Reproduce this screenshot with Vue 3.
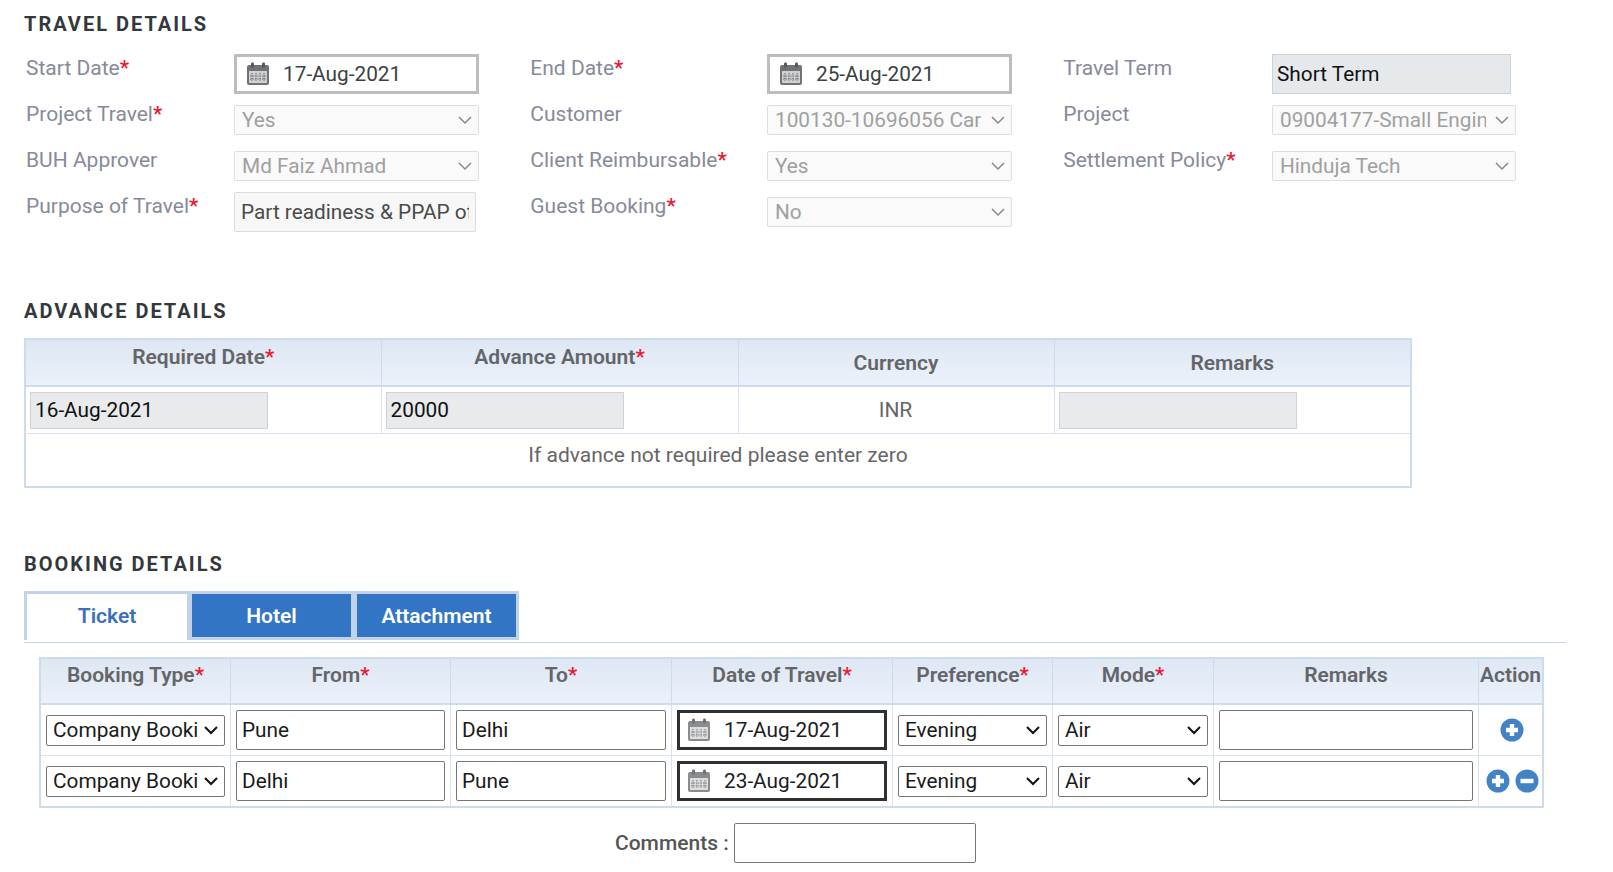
<script setup>
const travelRows = [
  [
    { label: 'Start Date', req: true, type: 'date', value: '17-Aug-2021' },
    { label: 'End Date', req: true, type: 'date', value: '25-Aug-2021' },
    { label: 'Travel Term', type: 'readonly', value: 'Short Term' }
  ],
  [
    { label: 'Project Travel', req: true, type: 'select', value: 'Yes' },
    { label: 'Customer', type: 'select', value: '100130-10696056 Carraro India' },
    { label: 'Project', type: 'select', value: '09004177-Small Engine Programme', wide: true }
  ],
  [
    { label: 'BUH Approver', type: 'select', value: 'Md Faiz Ahmad' },
    { label: 'Client Reimbursable', req: true, type: 'select', value: 'Yes' },
    { label: 'Settlement Policy', req: true, type: 'select', value: 'Hinduja Tech', wide: true }
  ],
  [
    { label: 'Purpose of Travel', req: true, type: 'text', value: 'Part readiness & PPAP of small engine' },
    { label: 'Guest Booking', req: true, type: 'select', value: 'No' }
  ]
]

const bookingHeads = [
  { label: 'Booking Type', req: true },
  { label: 'From', req: true },
  { label: 'To', req: true },
  { label: 'Date of Travel', req: true },
  { label: 'Preference', req: true },
  { label: 'Mode', req: true },
  { label: 'Remarks' },
  { label: 'Action' }
]

const bookings = [
  { from: 'Pune', to: 'Delhi', date: '17-Aug-2021', remove: false },
  { from: 'Delhi', to: 'Pune', date: '23-Aug-2021', remove: true }
]
</script>

<template>
  <div class="page">
    <h2 class="title">TRAVEL DETAILS</h2>
    <div class="travel-grid">
      <template v-for="(row, r) in travelRows" :key="r">
        <template v-for="f in row" :key="f.label">
          <label class="field-label">{{ f.label }}<span v-if="f.req" class="star">*</span></label>
          <div class="field">
            <div v-if="f.type === 'date'" class="date-box">
              <svg class="cal" viewBox="0 0 24 24">
                <rect x="1" y="3" width="22" height="20" rx="2" fill="#707275" />
                <rect x="3" y="9" width="18" height="12" fill="#d0d1d2" />
                <rect x="5" y="0.5" width="3" height="5" rx="1.2" fill="#55575a" />
                <rect x="16" y="0.5" width="3" height="5" rx="1.2" fill="#55575a" />
                <path d="M6 11v8M10 11v8M14 11v8M18 11v8M4 14h16M4 17h16" stroke="#6a6c6f" stroke-width="1.1" stroke-dasharray="1.4 1" />
              </svg>
              <input class="date-input" :value="f.value" readonly />
            </div>
            <input v-else-if="f.type === 'readonly'" class="term-input" :value="f.value" readonly />
            <input v-else-if="f.type === 'text'" class="purpose-input" :value="f.value" readonly />
            <select v-else class="dis-select" :class="{ wide: f.wide }" disabled>
              <option>{{ f.value }}</option>
            </select>
          </div>
        </template>
      </template>
    </div>

    <h2 class="title advance-title">ADVANCE DETAILS</h2>
    <table class="tbl advance">
      <colgroup>
        <col style="width: 356px" />
        <col style="width: 357px" />
        <col style="width: 316px" />
        <col />
      </colgroup>
      <thead>
        <tr>
          <th><span class="raised">Required Date<span class="star">*</span></span></th>
          <th><span class="raised">Advance Amount<span class="star">*</span></span></th>
          <th>Currency</th>
          <th>Remarks</th>
        </tr>
      </thead>
      <tbody>
        <tr class="adv-row">
          <td><input class="grey-input" value="16-Aug-2021" readonly /></td>
          <td><input class="grey-input" value="20000" readonly /></td>
          <td class="center">INR</td>
          <td><input class="grey-input" readonly /></td>
        </tr>
        <tr class="note-row">
          <td colspan="4" class="center">If advance not required please enter zero</td>
        </tr>
      </tbody>
    </table>

    <h2 class="title booking-title">BOOKING DETAILS</h2>
    <div class="tabs-line">
      <div class="tabs">
        <div class="tab active">Ticket</div>
        <div class="tab">Hotel</div>
        <div class="tab">Attachment</div>
      </div>
    </div>

    <table class="tbl booking">
      <colgroup>
        <col style="width: 190.5px" />
        <col style="width: 220px" />
        <col style="width: 221px" />
        <col style="width: 221px" />
        <col style="width: 160px" />
        <col style="width: 161px" />
        <col style="width: 265px" />
        <col />
      </colgroup>
      <thead>
        <tr>
          <th v-for="h in bookingHeads" :key="h.label">{{ h.label }}<span v-if="h.req" class="star">*</span></th>
        </tr>
      </thead>
      <tbody>
        <tr v-for="b in bookings" :key="b.date">
          <td>
            <select class="row-select"><option>Company Booking</option></select>
          </td>
          <td><input class="row-input" :value="b.from" /></td>
          <td><input class="row-input" :value="b.to" /></td>
          <td>
            <div class="date-box dark">
              <svg class="cal" viewBox="0 0 24 24">
                <rect x="1" y="3" width="22" height="20" rx="2" fill="#8a8c8e" />
                <rect x="3" y="9" width="18" height="12" fill="#dcdddd" />
                <rect x="5" y="0.5" width="3" height="5" rx="1.2" fill="#717376" />
                <rect x="16" y="0.5" width="3" height="5" rx="1.2" fill="#717376" />
                <path d="M6 11v8M10 11v8M14 11v8M18 11v8M4 14h16M4 17h16" stroke="#7d7f82" stroke-width="1.1" stroke-dasharray="1.4 1" />
              </svg>
              <input class="date-input" :value="b.date" readonly />
            </div>
          </td>
          <td><select class="row-select"><option>Evening</option></select></td>
          <td><select class="row-select"><option>Air</option></select></td>
          <td><input class="row-input" /></td>
          <td class="actions">
            <svg class="act" viewBox="0 0 24 24">
              <circle cx="12" cy="12" r="11.5" fill="#4382c4" />
              <path d="M12 6v12M6 12h12" stroke="#fff" stroke-width="4.4" />
            </svg>
            <svg v-if="b.remove" class="act" viewBox="0 0 24 24">
              <circle cx="12" cy="12" r="11.5" fill="#4382c4" />
              <path d="M5.5 12h13" stroke="#fff" stroke-width="4.4" />
            </svg>
          </td>
        </tr>
      </tbody>
    </table>

    <div class="comments">
      <label class="comments-label">Comments :</label>
      <input class="comments-input" />
    </div>
  </div>
</template>

<style>
html,
body {
  margin: 0;
  background: #fff;
}
</style>

<style scoped>
.page {
  box-sizing: border-box;
  height: 872px;
  padding: 12px 47px 0 24px;
  overflow: hidden;
  font-family: Roboto, 'Liberation Sans', sans-serif;
  font-size: 21px;
}

.title {
  margin: 0;
  font-size: 20px;
  line-height: 24px;
  font-weight: 700;
  letter-spacing: 2px;
  color: #33383d;
}

.star {
  color: #f0142d;
  font-weight: 500;
}

input,
select {
  font-size: 20.8px !important;
}

/* travel details */
.travel-grid {
  display: grid;
  grid-template-columns: 210px 294.3px 238.7px 294.2px 210.8px 1fr;
  grid-auto-rows: 46px;
  margin-top: 18px;
}

.field-label {
  margin-top: 2px;
  line-height: 24px;
  color: #868a9a;
  padding-left: 2px;
}

.date-box {
  box-sizing: border-box;
  display: flex;
  align-items: center;
  width: 245px;
  height: 40px;
  padding-left: 9px;
  border: 3px solid #bdbdbd;
  background: #fff;
}

.date-box.dark {
  width: 100%;
  padding-left: 7px;
  border-color: #303030;
}

.cal {
  flex: none;
  width: 24px;
  height: 24px;
}

.date-input {
  flex: 1;
  min-width: 0;
  margin-left: 13px;
  padding: 0;
  border: none;
  outline: none;
  background: transparent;
  font: inherit;
  color: #3c3f43;
}

.dark .date-input {
  color: #1c1c20;
}

.term-input {
  box-sizing: border-box;
  width: 239px;
  height: 40px;
  padding: 0 4px;
  border: 1px solid #ccd2d8;
  background: #e6e9ec;
  font: inherit;
  color: #111;
  outline: none;
}

.purpose-input {
  box-sizing: border-box;
  display: block;
  width: 242px;
  height: 40px;
  padding: 0 6px;
  border: 1px solid #dcdcdc;
  border-radius: 2px;
  background: #f7f7f7;
  font: inherit;
  color: #4a4a4a;
  outline: none;
}

.dis-select {
  box-sizing: border-box;
  display: block;
  width: 245px;
  height: 30px;
  margin-top: 5px;
  padding: 0 29px 0 7px;
  border: 1px solid #dedede;
  border-radius: 2px;
  appearance: none;
  background: #fafafa url("data:image/svg+xml,%3Csvg xmlns='http://www.w3.org/2000/svg' width='14' height='9' viewBox='0 0 14 9'%3E%3Cpath d='M1 1l6 6 6-6' fill='none' stroke='%23888' stroke-width='1.5'/%3E%3C/svg%3E") no-repeat right 6px center;
  font: inherit;
  color: #a0a0a0;
  opacity: 1;
}

.dis-select.wide {
  width: 244px;
}

/* tables */
.tbl {
  border-collapse: collapse;
  table-layout: fixed;
  border: 2px solid #cddcec;
}

.tbl th {
  border: 1px solid #cddcec;
  border-bottom-width: 2px;
  background: linear-gradient(#dde7f3, #ebf1fa);
  font-weight: 600;
  color: #646568;
  text-align: center;
  padding: 0;
}

.tbl td {
  border: 1px solid #d6e2ef;
  padding: 0 5px;
}

.center {
  text-align: center;
  color: #666;
}

.advance-title {
  margin-top: 61px;
}

.advance {
  width: 1388px;
  margin-top: 15px;
}

.advance th {
  height: 45px;
}

.raised {
  display: block;
  margin-bottom: 12px;
}

.adv-row td {
  height: 46px;
  padding-left: 4px;
}

.note-row td {
  height: 42px;
  padding-bottom: 10px;
}

.grey-input {
  box-sizing: border-box;
  display: block;
  width: 238px;
  height: 37px;
  padding: 0 4px;
  border: 1px solid #ced3d8;
  background: #e8eaec;
  font: inherit;
  color: #111;
  outline: none;
}

/* booking */
.booking-title {
  margin-top: 64px;
}

.tabs-line {
  margin-top: 15px;
  border-bottom: 1px solid #c3d4e6;
  width: 1542px;
}

.tabs {
  display: inline-flex;
  vertical-align: bottom;
  gap: 5px;
  padding: 3px 3px 0;
  background: #c1d3e8;
  height: 49px;
  box-sizing: border-box;
  margin-bottom: 2px;
}

.tab {
  width: 159px;
  height: 43px;
  line-height: 45px;
  text-align: center;
  background: #3375c5;
  color: #fff;
  font-weight: 600;
}

.tab:last-child {
  margin-left: 1px;
}

.tab.active {
  width: 160px;
  height: 48px;
  background: #fff;
  color: #3a72ba;
}

.booking {
  width: 1505px;
  margin: 14px 0 0 15px;
}

.booking th {
  height: 46px;
  vertical-align: top;
  padding-top: 4px;
  line-height: 24px;
  box-sizing: border-box;
}

.booking td {
  height: 50px;
}

.row-input {
  box-sizing: border-box;
  display: block;
  width: 100%;
  height: 40px;
  padding: 0 5px;
  border: 1px solid #767676;
  border-radius: 2px;
  background: #fff;
  font: inherit;
  color: #1a1a1a;
  outline: none;
}

.row-select {
  box-sizing: border-box;
  display: block;
  width: 100%;
  height: 31px;
  padding: 0 26px 0 6px;
  border: 1px solid #767676;
  border-radius: 2px;
  appearance: none;
  background: #fff url("data:image/svg+xml,%3Csvg xmlns='http://www.w3.org/2000/svg' width='14' height='9' viewBox='0 0 14 9'%3E%3Cpath d='M1 1l6 6 6-6' fill='none' stroke='%23111' stroke-width='2'/%3E%3C/svg%3E") no-repeat right 6px center;
  font: inherit;
  color: #1a1a1a;
}

.actions {
  text-align: center;
  white-space: nowrap;
  font-size: 0;
  padding: 0 0 0 3px !important;
}

.act {
  width: 24px;
  height: 24px;
  vertical-align: middle;
}

.act + .act {
  margin-left: 5px;
}

.comments {
  display: flex;
  align-items: center;
  margin-top: 15px;
  padding-left: 591px;
}

.comments-label {
  font-weight: 500;
  color: #555;
}

.comments-input {
  box-sizing: border-box;
  width: 242px;
  height: 40px;
  margin-left: 5px;
  border: 1px solid #767676;
  border-radius: 2px;
  background: #fff;
  outline: none;
}
</style>
